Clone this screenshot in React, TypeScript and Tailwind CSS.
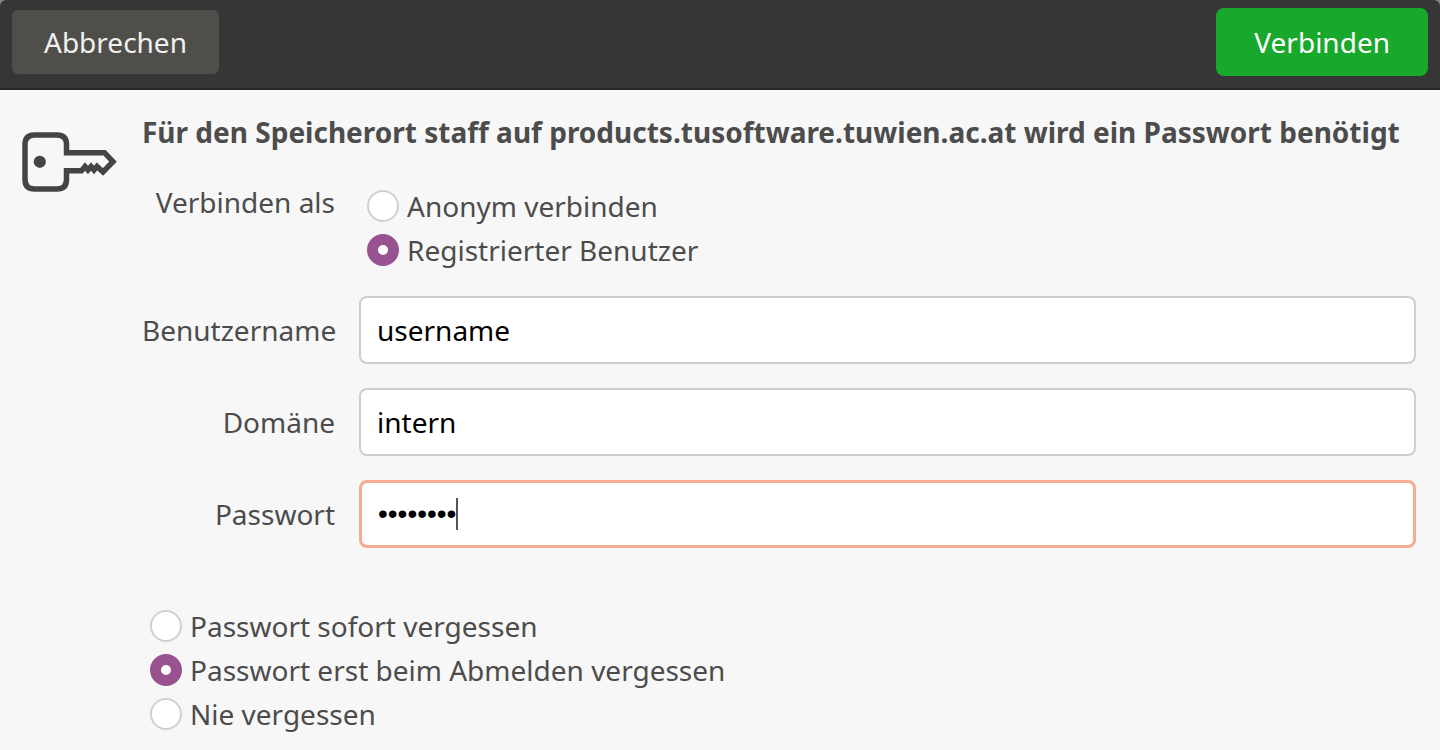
import { useState } from 'react';

type Option = {
  value: string;
  label: string;
};

const MODES: Option[] = [
  { value: 'anonymous', label: 'Anonym verbinden' },
  { value: 'registered', label: 'Registrierter Benutzer' },
];

const REMEMBER: Option[] = [
  { value: 'never', label: 'Passwort sofort vergessen' },
  { value: 'session', label: 'Passwort erst beim Abmelden vergessen' },
  { value: 'forever', label: 'Nie vergessen' },
];

function KeyIcon() {
  return (
    <svg width={96} height={60} viewBox="0 0 96 60" fill="none" stroke="#444" strokeWidth={5.5} className="shrink-0" aria-hidden>
      <path d="M44.5 20.7V12.5Q44.5 3 35 3H12.5Q3 3 3 12.5V47.5Q3 57 12.5 57H35Q44.5 57 44.5 47.5V38.7H59.5L63 34.5L66 38L69 34.5L72 38L75 34.5L81 40L91 29.7L82.5 20.7H41.8" />
      <circle cx={17.8} cy={29.8} r={6.1} fill="#444" stroke="none" />
    </svg>
  );
}

function RadioList({ name, options, initial }: { name: string; options: Option[]; initial: string }) {
  const [value, setValue] = useState(initial);

  return (
    <div className="flex flex-col items-start">
      {options.map((o) => (
        <label key={o.value} className="flex h-11 items-center gap-2">
          <input
            type="radio"
            name={name}
            value={o.value}
            checked={value === o.value}
            onChange={() => setValue(o.value)}
            className="size-8 shrink-0 appearance-none rounded-full border-2 border-[#d0d0d0] bg-white checked:border-[11px] checked:border-[#97528f]"
          />
          <span className="whitespace-nowrap">{o.label}</span>
        </label>
      ))}
    </div>
  );
}

function TextField({ id, label, initial }: { id: string; label: string; initial: string }) {
  const [value, setValue] = useState(initial);

  return (
    <>
      <label htmlFor={id} className="text-right">{label}</label>
      <input
        id={id}
        type="text"
        value={value}
        onChange={(e) => setValue(e.target.value)}
        className="h-17 w-full rounded-lg border-2 border-[#cecece] bg-white px-4 text-black outline-none"
      />
    </>
  );
}

export default function App() {
  const [password, setPassword] = useState('geheim12');

  return (
    <div className="bg-[#8a8a8a] font-['Noto_Sans','Open_Sans',sans-serif] text-[28px] leading-9 text-[#4c4c4c]">
      <header className="flex items-center justify-between rounded-t-md border-b-2 border-[#282626] bg-[#383536] px-3 pt-2 pb-3 text-[#f0f0ee]">
        <button type="button" className="h-16 rounded-md bg-[#504e4b] px-8">Abbrechen</button>
        <button type="submit" form="login" className="h-17 rounded-lg bg-[#17a82c] px-[38px] text-white">Verbinden</button>
      </header>

      <form id="login" onSubmit={(e) => e.preventDefault()} className="flex min-h-[660px] items-start gap-6 bg-[#f7f7f7] pr-6 pl-[22px] pt-6">
        <div className="pt-[18px]">
          <KeyIcon />
        </div>
        <div className="min-w-0 flex-1">
          <h1 className="whitespace-nowrap font-bold">
            Für den Speicherort staff auf products.tusoftware.tuwien.ac.at wird ein Passwort benötigt
          </h1>

          <div className="mt-[34px] grid grid-cols-[193px_1fr] items-center gap-x-6 gap-y-6">
            <span className="self-start text-right">Verbinden als</span>
            <div className="pl-2">
              <RadioList name="mode" options={MODES} initial="registered" />
            </div>
            <TextField id="user" label="Benutzername" initial="username" />
            <TextField id="domain" label="Domäne" initial="intern" />
            <label htmlFor="password" className="text-right">Passwort</label>
            <div className="flex h-17 items-center rounded-lg border-[3px] border-[#f6ab92] bg-white pl-4">
              <input
                id="password"
                type="password"
                value={password}
                onChange={(e) => setPassword(e.target.value)}
                className="font-['Liberation_Sans',sans-serif] text-black caret-transparent outline-none [field-sizing:content]"
              />
              <span className="h-8 w-0.5 bg-[#555]" />
            </div>
          </div>

          <div className="mt-14 pl-2">
            <RadioList name="remember" options={REMEMBER} initial="session" />
          </div>
        </div>
      </form>
    </div>
  );
}
